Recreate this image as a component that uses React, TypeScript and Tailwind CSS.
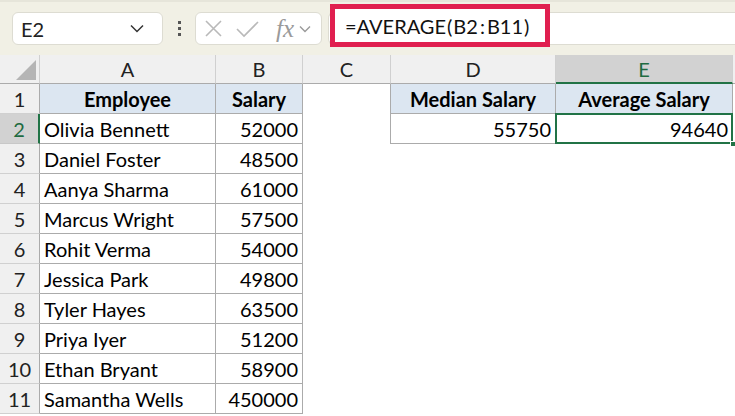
import React from "react";

const rows: [string, string][] = [
  ["Olivia Bennett", "52000"],
  ["Daniel Foster", "48500"],
  ["Aanya Sharma", "61000"],
  ["Marcus Wright", "57500"],
  ["Rohit Verma", "54000"],
  ["Jessica Park", "49800"],
  ["Tyler Hayes", "63500"],
  ["Priya Iyer", "51200"],
  ["Ethan Bryant", "58900"],
  ["Samantha Wells", "450000"],
];

const font = { fontFamily: "Lato, 'Open Sans', sans-serif" };

function ColHeader({ label, selected }: { label: string; selected?: boolean }) {
  return (
    <div
      className={
        selected
          ? "h-[29px] flex items-center justify-center bg-[#d2d2d2] text-[#1e6b41] border-r border-[#d0d0d0] border-b-2 border-b-[#217346] text-[20px]"
          : "h-[29px] flex items-center justify-center bg-[#f0f0f0] text-[#222] border-r border-[#d0d0d0] border-b border-b-[#ababab] text-[20px]"
      }
    >
      {label}
    </div>
  );
}

function RowHeader({ n, selected }: { n: number; selected?: boolean }) {
  return (
    <div
      className={
        selected
          ? "h-[30px] flex items-center justify-center bg-[#d2d2d2] text-[#1e6b41] border-b border-[#c8c8c8] border-r-2 border-r-[#217346] text-[20px]"
          : "h-[30px] flex items-center justify-center bg-[#f0f0f0] text-[#222] border-b border-[#d0d0d0] border-r border-r-[#ababab] text-[20px]"
      }
    >
      {n}
    </div>
  );
}

export default function App() {
  return (
    <div className="w-[735px] h-[416px] overflow-hidden bg-white text-black" style={font}>
      {/* Toolbar */}
      <div className="h-[55px] bg-[#f1f0e5] border-t-2 border-[#e6e5da] flex items-center pl-[12px] relative">
        <div className="w-[151px] h-[33px] bg-white rounded-[6px] border border-[#dddcd2] flex items-center pl-[8px] pr-[18px] justify-between">
          <span className="text-[20px] text-[#222]">E2</span>
          <svg width="14" height="9" viewBox="0 0 14 9">
            <path d="M1 1.5 L7 7.5 L13 1.5" fill="none" stroke="#333" strokeWidth="1.5" />
          </svg>
        </div>
        <div className="w-[32px] flex flex-col items-center gap-[3px]">
          <div className="w-[3px] h-[3px] bg-[#555]" />
          <div className="w-[3px] h-[3px] bg-[#555]" />
          <div className="w-[3px] h-[3px] bg-[#555]" />
        </div>
        <div className="w-[127px] h-[33px] bg-white rounded-[6px] border border-[#dddcd2] flex items-center pl-[8px] gap-[13px]">
          <svg width="19" height="19" viewBox="0 0 19 19">
            <path d="M2 2 L17 17 M17 2 L2 17" stroke="#b9b9b9" strokeWidth="1.6" fill="none" />
          </svg>
          <svg width="23" height="18" viewBox="0 0 23 18">
            <path d="M1 9 L8 16 L22 2" stroke="#b9b9b9" strokeWidth="1.6" fill="none" />
          </svg>
          <div className="flex items-center gap-[5px] ml-[4px]">
            <span
              className="text-[25px] italic text-[#9a9a9a] leading-none"
              style={{ fontFamily: "'Liberation Serif', serif" }}
            >
              fx
            </span>
            <svg width="12" height="8" viewBox="0 0 12 8">
              <path d="M1 1.5 L6 6.5 L11 1.5" fill="none" stroke="#9a9a9a" strokeWidth="1.4" />
            </svg>
          </div>
        </div>
        <div className="ml-[6px] flex-1 h-[33px] bg-white border border-[#dddcd2] rounded-l-[6px] border-r-0" />
        {/* red highlight */}
        <div className="absolute left-[330px] top-[2px] w-[220px] h-[43px] border-[5px] border-[#e01f4f] bg-white flex items-center pl-[10px]">
          <span className="text-[20px] text-[#111]">
            =AVERAGE<span className="mx-[1px]">(</span>B2<span className="mx-[2px]">:</span>B11<span className="mx-[1px]">)</span>
          </span>
        </div>
      </div>

      {/* Sheet */}
      <div className="grid grid-cols-[40px_176px_87px_88px_165px_177px_1fr]">
        {/* header row */}
        <div className="h-[29px] bg-[#f0f0f0] border-r border-[#d0d0d0] border-b border-b-[#ababab] relative">
          <svg className="absolute right-[3px] bottom-[3px]" width="20" height="20" viewBox="0 0 20 20">
            <path d="M20 0 L20 20 L0 20 Z" fill="#b5b5b5" />
          </svg>
        </div>
        <ColHeader label="A" />
        <ColHeader label="B" />
        <ColHeader label="C" />
        <ColHeader label="D" />
        <ColHeader label="E" selected />
        <div className="h-[29px] bg-[#f0f0f0] border-b border-b-[#ababab]" />

        {/* row 1 */}
        <RowHeader n={1} />
        <div className="h-[30px] bg-[#dce6f1] border-r border-b border-[#ababab] flex items-center justify-center font-bold text-[20px]">
          Employee
        </div>
        <div className="h-[30px] bg-[#dce6f1] border-r border-b border-[#ababab] flex items-center justify-center font-bold text-[20px]">
          Salary
        </div>
        <div className="h-[30px] border-r border-[#ababab]" />
        <div className="h-[30px] bg-[#dce6f1] border-r border-b border-[#ababab] flex items-center justify-center font-bold text-[20px]">
          Median Salary
        </div>
        <div className="h-[30px] bg-[#dce6f1] border-r border-b border-[#ababab] flex items-center justify-center font-bold text-[20px]">
          Average Salary
        </div>
        <div className="h-[30px]" />

        {rows.map(([name, sal], i) => {
          const r = i + 2;
          return (
            <React.Fragment key={r}>
              <RowHeader n={r} selected={r === 2} />
              <div className="h-[30px] border-r border-b border-[#ababab] flex items-center pl-[4px] text-[20px]">
                {name}
              </div>
              <div className="h-[30px] border-r border-b border-[#ababab] flex items-center justify-end pr-[4px] text-[20px]">
                {sal}
              </div>
              {r === 2 ? (
                <>
                  <div className="h-[30px] border-r border-[#ababab]" />
                  <div className="h-[30px] border-r border-b border-[#ababab] flex items-center justify-end pr-[4px] text-[20px]">
                    55750
                  </div>
                  <div className="h-[30px] border-r border-b border-[#ababab] flex items-center justify-end pr-[4px] text-[20px] relative">
                    94640
                    <div className="absolute left-[-1px] top-[-1px] right-[-1px] bottom-[-1px] border-2 border-[#217346]" />
                    <div className="absolute right-[-4px] bottom-[-4px] w-[6px] h-[6px] bg-[#217346] border border-white" />
                  </div>
                  <div className="h-[30px]" />
                </>
              ) : (
                <>
                  <div className="h-[30px]" />
                  <div className="h-[30px]" />
                  <div className="h-[30px]" />
                  <div className="h-[30px]" />
                </>
              )}
            </React.Fragment>
          );
        })}
      </div>
    </div>
  );
}
